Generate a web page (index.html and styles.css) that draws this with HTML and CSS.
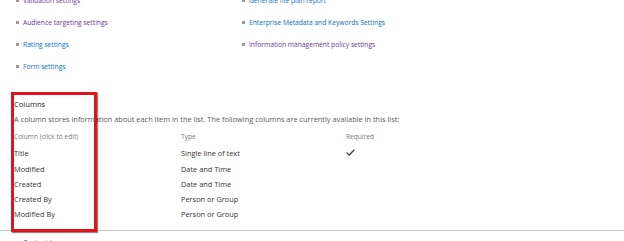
FILE: index.html
```html
<!DOCTYPE html>
<html lang="en">
<head>
    <meta charset="UTF-8">
    <title>List settings</title>
    <link rel="stylesheet" href="styles.css">
</head>
<body>
    <div class="page">
        <!-- general settings links -->
        <ul class="settings">
            <li><a href="#" class="visited">Validation settings</a></li>
            <li><a href="#">Generate file plan report</a></li>
            <li><a href="#" class="visited">Audience targeting settings</a></li>
            <li><a href="#">Enterprise Metadata and Keywords Settings</a></li>
            <li><a href="#">Rating settings</a></li>
            <li><a href="#" class="visited">Information management policy settings</a></li>
            <li><a href="#">Form settings</a></li>
        </ul>

        <!-- columns -->
        <div class="columns">
            <div class="highlight"></div>
            <h3>Columns</h3>
            <p class="desc">A column stores information about each item in the list. The following columns are currently available in this list:</p>
            <table class="col-table">
                <thead>
                    <tr>
                        <th>Column (click to edit)</th>
                        <th>Type</th>
                        <th>Required</th>
                    </tr>
                </thead>
                <tbody>
                    <tr>
                        <td>Title</td>
                        <td>Single line of text</td>
                        <td><svg class="check" width="9" height="7" viewBox="0 0 9 7"><path d="M0.7 3.6 L3.2 6 L8.3 0.7" fill="none" stroke="#444" stroke-width="1.3"/></svg></td>
                    </tr>
                    <tr><td>Modified</td><td>Date and Time</td><td></td></tr>
                    <tr><td>Created</td><td>Date and Time</td><td></td></tr>
                    <tr><td>Created By</td><td>Person or Group</td><td></td></tr>
                    <tr><td>Modified By</td><td>Person or Group</td><td></td></tr>
                </tbody>
            </table>
        </div>

        <ul class="settings more">
            <li><a href="#">Content types</a></li>
        </ul>
    </div>
</body>
</html>
```

FILE: styles.css
```css
body {
    margin: 0;
    padding: 0;
    background-color: #ffffff;
    font-family: "Open Sans", "Noto Sans", sans-serif;
    overflow: hidden;
}
.page {
    width: 624px;
}
.settings {
    list-style: none;
    margin: -11px 0 0 0;
    padding: 0 0 0 16px;
    display: grid;
    grid-template-columns: 226px 1fr;
}
.settings li {
    height: 22px;
    display: flex;
    align-items: center;
    font-size: 6.7px;
}
.settings li::before {
    content: "";
    width: 3px;
    height: 3px;
    background-color: #9a9a9a;
    margin-right: 4px;
}
.settings a {
    color: #0072c6;
    text-decoration: none;
}
.settings a.visited {
    color: #68389e;
}
.settings.more {
    margin-top: 0;
}
.columns {
    position: relative;
    margin-top: 20px;
    padding: 0 0 9px 14px;
    border-bottom: 1px solid #c8c8c8;
}
.highlight {
    position: absolute;
    left: 11px;
    top: -5px;
    width: 80px;
    height: 134px;
    border: 3px solid #e3131b;
    box-shadow: 1px 1px 1px rgba(0, 0, 0, 0.45);
}
.columns h3 {
    margin: 0;
    font-size: 7.6px;
    font-weight: normal;
    color: #222;
    line-height: 14px;
}
.desc {
    margin: 2px 0 0 0;
    font-size: 7.4px;
    color: #5a5a5a;
    line-height: 12px;
}
.col-table {
    border-collapse: collapse;
    margin-top: 4px;
}
.col-table th, .col-table td {
    padding: 0;
    text-align: left;
    vertical-align: middle;
}
.col-table th {
    font-size: 6.6px;
    font-weight: normal;
    color: #7a7a7a;
    height: 15px;
}
.col-table td {
    font-size: 7.4px;
    color: #333;
    height: 15px;
}
.col-table tbody tr:first-child td {
    height: 17px;
}
.col-table th:nth-child(1) { width: 167px; }
.col-table th:nth-child(2) { width: 165px; }
.check {
    display: block;
}
```
